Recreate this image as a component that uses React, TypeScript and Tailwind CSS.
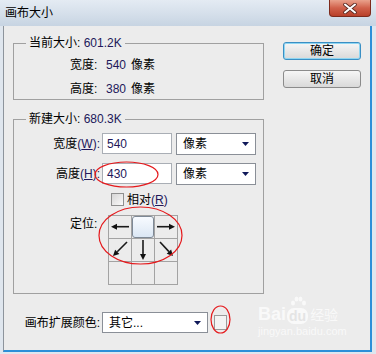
const font = "font-['Liberation_Sans','Noto_Sans_CJK_SC',sans-serif]"

function Arrow({ x1, y1, x2, y2 }: { x1: number; y1: number; x2: number; y2: number }) {
  const a = Math.atan2(y2 - y1, x2 - x1)
  const len = 6
  const w = 3
  const bx = x2 - len * Math.cos(a)
  const by = y2 - len * Math.sin(a)
  const pts = [
    [x2, y2],
    [bx + w * Math.sin(a), by - w * Math.cos(a)],
    [bx - w * Math.sin(a), by + w * Math.cos(a)],
  ]
    .map((p) => p.join(','))
    .join(' ')
  return (
    <svg width="22" height="22" viewBox="0 0 22 22">
      <line x1={x1} y1={y1} x2={bx} y2={by} stroke="#1a1a1a" strokeWidth="1.6" />
      <polygon points={pts} fill="#111" />
    </svg>
  )
}

function Select({ value, w }: { value: string; w: string }) {
  return (
    <div
      className={`flex h-full items-center justify-between border border-[#8a8f97] bg-white pl-[6px] pr-[6px] ${w}`}
    >
      <span>{value}</span>
      <svg width="7" height="4" viewBox="0 0 7 4">
        <polygon points="0,0 7,0 3.5,4" fill="#10195a" />
      </svg>
    </div>
  )
}

function Button({ label, primary }: { label: string; primary?: boolean }) {
  return (
    <div
      className={`flex h-[18px] w-[78px] items-center justify-center rounded-[3px] border bg-gradient-to-b from-[#f6f6f6] to-[#d9d9d9] ${
        primary ? 'border-[#3a8fc4] shadow-[inset_0_0_0_1px_#8fd6f2]' : 'border-[#8b8b8b]'
      }`}
    >
      {label}
    </div>
  )
}

const latin = 'text-[#22185a]'

export default function App() {
  return (
    <div className={`relative h-[354px] w-[376px] bg-[#dfe6ee] text-[12px] leading-[14px] text-black ${font}`}>
      {/* title bar */}
      <div className="flex h-[26px] items-start justify-between bg-gradient-to-b from-[#e4ebf3] via-[#d6e0eb] to-[#c7d4e2]">
        <div className="pl-[5px] pt-[6px] text-[12px]">画布大小</div>
        <div className="mr-[5px] flex h-[17px] w-[42px] items-center justify-center rounded-b-[4px] border border-t-0 border-[#7d2a1c] bg-gradient-to-b from-[#e9a18c] via-[#d0604a] to-[#b8402a]">
          <svg width="14" height="11" viewBox="0 0 14 11">
            <path d="M2 1.5 L12 9.5 M12 1.5 L2 9.5" stroke="#5a2a22" strokeWidth="3.6" strokeLinecap="round" />
            <path d="M2 1.5 L12 9.5 M12 1.5 L2 9.5" stroke="#ffffff" strokeWidth="2" strokeLinecap="round" />
          </svg>
        </div>
      </div>

      {/* body */}
      <div className="ml-[3px] mr-[4px] flex h-[326px] border-b-2 border-l border-r-2 border-b-[#2b8fd8] border-l-[#8d949c] border-r-[#2b8fd8] bg-[#ececec] pl-[9px]">
        <div className="w-[251px] pt-[10px]">
          <fieldset className="h-[64px] border border-[#a0a0a0]">
            <legend className="ml-[12px] px-[3px]">
              当前大小: <span className={latin}>601.2K</span>
            </legend>
            <div className="flex flex-col gap-[8px] pl-[56px] pt-[7px]">
              <div className="flex h-[16px] items-center">
                <span className="w-[36px]">宽度:</span>
                <span className={latin}>540</span>
                <span className="ml-[5px]">像素</span>
              </div>
              <div className="flex h-[16px] items-center">
                <span className="w-[36px]">高度:</span>
                <span className={latin}>380</span>
                <span className="ml-[5px]">像素</span>
              </div>
            </div>
          </fieldset>

          <fieldset className="mt-[12px] h-[182px] border border-[#a0a0a0]">
            <legend className="ml-[12px] px-[3px]">
              新建大小: <span className={latin}>680.3K</span>
            </legend>
            <div className="flex flex-col pt-[7px]">
              <div className="flex h-[22px] items-center">
                <div className="w-[86px] text-right">
                  宽度<span className={latin}>(<u>W</u>):</span>
                </div>
                <div className="ml-[2px] flex h-[21px] w-[70px] items-center self-start border border-[#a9aeb5] bg-white pl-[4px]">
                  <span className={latin}>540</span>
                </div>
                <div className="ml-[4px] h-full">
                  <Select value="像素" w="w-[80px]" />
                </div>
              </div>
              <div className="mt-[8px] flex h-[22px] items-center">
                <div className="w-[86px] text-right">
                  高度<span className={latin}>(<u>H</u>):</span>
                </div>
                <div className="ml-[2px] flex h-[21px] w-[70px] items-center self-start border border-[#a9aeb5] bg-white pl-[4px]">
                  <span className={latin}>430</span>
                </div>
                <div className="ml-[4px] h-full">
                  <Select value="像素" w="w-[80px]" />
                </div>
              </div>
              <div className="mt-[8px] flex h-[13px] items-center pl-[97px]">
                <div className="h-[13px] w-[13px] border border-[#8e8f8f] bg-gradient-to-br from-[#d6d6d6] to-[#fafafa]" />
                <span className="ml-[3px]">
                  相对<span className={latin}>(<u>R</u>)</span>
                </span>
              </div>
              <div className="mt-[9px] flex">
                <div className="w-[86px] pl-[56px] pt-[2px]">定位:</div>
                <div className="ml-[8px] grid grid-cols-[repeat(3,23px)] border-l border-t border-[#a3a3a3]">
                  <div className="h-[23px] w-[23px] border-b border-r border-[#a3a3a3]">
                    <Arrow x1={20} y1={10.7} x2={2} y2={10.7} />
                  </div>
                  <div className="h-[23px] w-[23px] border-b border-r border-[#a3a3a3]">
                    <div className="h-full w-full rounded-[3px] border border-[#7e8996] bg-gradient-to-b from-[#f8fbff] to-[#dbe7f4]" />
                  </div>
                  <div className="h-[23px] w-[23px] border-b border-r border-[#a3a3a3]">
                    <Arrow x1={2} y1={10.7} x2={20} y2={10.7} />
                  </div>
                  <div className="h-[23px] w-[23px] border-b border-r border-[#a3a3a3]">
                    <Arrow x1={18} y1={3} x2={4} y2={17} />
                  </div>
                  <div className="h-[23px] w-[23px] border-b border-r border-[#a3a3a3]">
                    <Arrow x1={11} y1={1} x2={11} y2={21} />
                  </div>
                  <div className="h-[23px] w-[23px] border-b border-r border-[#a3a3a3]">
                    <Arrow x1={5} y1={3} x2={18} y2={17} />
                  </div>
                  <div className="h-[23px] w-[23px] border-b border-r border-[#a3a3a3]" />
                  <div className="h-[23px] w-[23px] border-b border-r border-[#a3a3a3]" />
                  <div className="h-[23px] w-[23px] border-b border-r border-[#a3a3a3]" />
                </div>
              </div>
            </div>
          </fieldset>

          <div className="mt-[18px] flex h-[21px] items-center">
            <div className="w-[87px] text-right">画布扩展颜色:</div>
            <div className="ml-[2px] h-full">
              <Select value="其它..." w="w-[106px]" />
            </div>
            <div className="ml-[6px] h-[15px] w-[13px] border border-[#9a9a9a] bg-[#f4f4f4]" />
          </div>
        </div>

        <div className="ml-[19px] flex flex-col gap-[10px] pt-[16px]">
          <Button label="确定" primary />
          <Button label="取消" />
        </div>
      </div>

      {/* watermark */}
      <div className="pointer-events-none absolute left-[258px] top-[296px] flex flex-col items-start text-white opacity-70">
        <div className="flex items-end">
          <span className="font-['Liberation_Sans'] text-[18px] font-bold leading-[20px]">Bai</span>
          <div className="relative ml-[1px] flex flex-col items-center">
            <svg width="18" height="12" viewBox="0 0 18 12">
              <ellipse cx="4" cy="7" rx="2" ry="2.6" fill="#fff" />
              <ellipse cx="7.5" cy="3" rx="2" ry="2.6" fill="#fff" />
              <ellipse cx="11.5" cy="3" rx="2" ry="2.6" fill="#fff" />
              <ellipse cx="15" cy="7" rx="2" ry="2.6" fill="#fff" />
            </svg>
            <span className="rounded-[7px] bg-white px-[2px] font-['Liberation_Sans'] text-[14px] font-bold leading-[16px] text-[#e2e2e2]">
              du
            </span>
          </div>
          <span className="ml-[2px] text-[14px] leading-[18px]">经验</span>
        </div>
        <span className="mt-[1px] font-['Liberation_Sans'] text-[11px] leading-[12px]">jingyan.baidu.com</span>
      </div>

      {/* red annotation marks */}
      <svg className="pointer-events-none absolute left-0 top-0" width="376" height="354" viewBox="0 0 376 354">
        <ellipse cx="126.5" cy="174.5" rx="31.5" ry="12.5" fill="none" stroke="#e5191c" strokeWidth="1.2" />
        <ellipse cx="140.5" cy="235.5" rx="41.5" ry="28.5" fill="none" stroke="#e5191c" strokeWidth="1.2" />
        <ellipse cx="220.5" cy="319.5" rx="9.5" ry="13.5" fill="none" stroke="#e5191c" strokeWidth="1.2" />
      </svg>
    </div>
  )
}
